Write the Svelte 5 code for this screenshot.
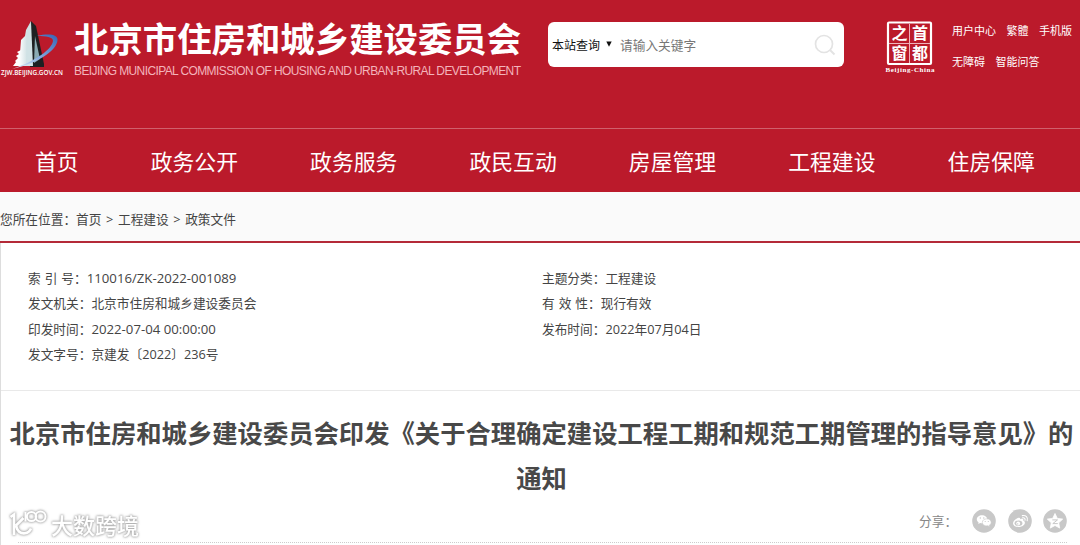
<script lang="ts">
   const siteName: string = "北京市住房和城乡建设委员会";
   const navItems: string[] = ["首页", "政务公开", "政务服务", "政民互动", "房屋管理", "工程建设", "住房保障"];
   const topLinks: string[][] = [
      ["用户中心", "繁體", "手机版"],
      ["无障碍", "智能问答"],
   ];
   const crumbs: string[] = ["首页", "工程建设", "政策文件"];

   const leftInfo = [
      { label: "索 引 号：", value: "110016/ZK-2022-001089", numeric: true },
      { label: "发文机关：", value: siteName },
      { label: "印发时间：", value: "2022-07-04 00:00:00", numeric: true },
      { label: "发文字号：", value: "京建发〔2022〕236号" },
   ];
   const rightInfo = [
      { label: "主题分类：", value: "工程建设" },
      { label: "有 效 性：", value: "现行有效" },
      { label: "发布时间：", value: "2022年07月04日" },
   ];
</script>

<div class="page" lang="zh-CN">
   <header>
      <div class="top">
         <svg class="logo" width="66" height="84" viewBox="0 0 66 84">
            <defs>
               <linearGradient id="ring" x1="0" y1="1" x2="1" y2="0">
                  <stop offset="0" stop-color="#e8f1fa" />
                  <stop offset="0.5" stop-color="#7fa6dc" />
                  <stop offset="1" stop-color="#3563b5" />
               </linearGradient>
               <linearGradient id="tower" x1="0" y1="0" x2="1" y2="0">
                  <stop offset="0" stop-color="#ffffff" />
                  <stop offset="1" stop-color="#b4cfd4" />
               </linearGradient>
            </defs>
            <path d="M13 66l3-4-1-1 3-3-2-2 3-2-2-2 4-2v16z" fill="#fff" />
            <path d="M19 66l2-26 4-4 1-6 5-9 1 45z" fill="url(#tower)" />
            <path d="M31 21l5 5 8 38v3H30z" fill="#1d2022" />
            <path d="M27 30l4-8 2 44h-7z" fill="#d0e2e5" />
            <path d="M35 36l5 23-6 4z" fill="#8aabb2" />
            <path d="M37 36c13-3 21-1 20.500 4C57 50 39 63 12 69c24-8 40-20 41-28 .5-4-7-5-16-5z" fill="url(#ring)" />
            <text x="1" y="75" textLength="62" lengthAdjust="spacingAndGlyphs">ZJW.BEIJING.GOV.CN</text>
         </svg>
         <div class="site-title">
            <h1>{siteName}</h1>
            <svg width="448" height="18" viewBox="0 0 448 18">
               <text x="0" y="14" textLength="447" lengthAdjust="spacing">BEIJING MUNICIPAL COMMISSION OF HOUSING AND URBAN-RURAL DEVELOPMENT</text>
            </svg>
         </div>
         <div class="search">
            <span class="scope">本站查询</span>
            <svg class="arrow" width="6" height="6" viewBox="0 0 6 6"><path d="M.3.5h5.4L3 5.8z" fill="#111" /></svg>
            <span class="placeholder">请输入关键字</span>
            <svg class="lens" width="22" height="22" viewBox="0 0 22 22" fill="none" stroke="#e3e3e3">
               <circle cx="10" cy="10" r="8.5" stroke-width="1.7" />
               <path d="M16 16l4.500 4.500" stroke-width="2" />
            </svg>
         </div>
         <svg class="capital" width="52" height="54" viewBox="0 0 52 54">
            <rect x="4" y="2.500" width="43" height="41.500" rx="1" fill="none" stroke="#fff" stroke-width="2.200" />
            <path d="M25.500 4v39M5 23.500h41" stroke="#efb3ba" stroke-width="1" />
            <g class="seal">
               <text x="7.500" y="18.500">之</text>
               <text x="28" y="18.500">首</text>
               <text x="7.500" y="38.500">窗</text>
               <text x="28" y="38.500">都</text>
            </g>
            <text class="latin" x="1.500" y="52" textLength="49" lengthAdjust="spacing">Beijing-China</text>
         </svg>
         <div class="links">
            {#each topLinks as row}
               <div class="link-row">
                  {#each row as link}
                     <span>{link}</span>
                  {/each}
               </div>
            {/each}
         </div>
      </div>
      <nav>
         {#each navItems as item}
            <span>{item}</span>
         {/each}
      </nav>
   </header>

   <div class="crumbs">您所在位置：{crumbs.join(" > ")}</div>

   <main>
      <section class="info">
         {#each [leftInfo, rightInfo] as column}
            <div class="column">
               {#each column as { label, value, numeric }}
                  <p>{label}<span class:numeric>{value}</span></p>
               {/each}
            </div>
         {/each}
      </section>

      <h2>北京市住房和城乡建设委员会印发《关于合理确定建设工程工期和规范工期管理的指导意见》的<br />通知</h2>

      <div class="share">
         <span>分享：</span>
         <svg width="24" height="24" viewBox="0 0 24 24">
            <circle cx="12" cy="12" r="11.8" fill="#c8c8c8" />
            <path d="M10 6.3c-3 0-5.2 1.8-5.2 4 0 1.300.7 2.400 1.800 3.100l-.4 1.700 2-1c3.800.8 7-1 7-3.800 0-2.200-2.200-4-5.200-4z" fill="#fff" />
            <path d="M14.800 9.800c-2.600 0-4.500 1.600-4.500 3.600 0 2.300 2.500 3.900 5.500 3.400l1.900.9-.4-1.500c1.200-.6 1.900-1.600 1.900-2.800 0-2-1.900-3.600-4.400-3.600z" fill="#fff" stroke="#c8c8c8" stroke-width=".6" />
            <g fill="#c8c8c8"><circle cx="8.300" cy="9" r=".7" /><circle cx="11.800" cy="9" r=".7" /><circle cx="13.200" cy="12.500" r=".6" /><circle cx="16.300" cy="12.500" r=".6" /></g>
         </svg>
         <svg width="24" height="24" viewBox="0 0 24 24">
            <circle cx="12" cy="12" r="11.8" fill="#c8c8c8" />
            <path d="M9.800 9c1.700-.8 2.700-.2 2.300 1.200 2.200-.8 3.800-.3 3.200 1.500 3.500 1.300 1 6.300-4.700 6.300-3 0-5.600-1.400-5.600-3.800C5 12.400 7.400 10 9.800 9z" fill="#fff" />
            <ellipse cx="10.500" cy="14.300" rx="3.900" ry="2.700" fill="#c8c8c8" />
            <circle cx="10.200" cy="14.500" r="1.900" fill="#fff" />
            <circle cx="9.700" cy="14.900" r=".7" fill="#c8c8c8" />
            <path d="M14.300 6.600c3.500-.7 6 2 4.900 5.200M14.600 8.800c1.800-.3 2.900.9 2.400 2.500" fill="none" stroke="#fff" stroke-width="1.100" stroke-linecap="round" />
         </svg>
         <svg width="24" height="24" viewBox="0 0 24 24">
            <circle cx="12" cy="12" r="11.8" fill="#c8c8c8" />
            <path d="M12 4.500l2.300 4.900 5.400.7-4 3.700 1 5.300-4.700-2.600-4.700 2.600 1-5.300-4-3.700 5.400-.7z" fill="#fff" stroke="#fff" stroke-width=".8" stroke-linejoin="round" />
            <path d="M9.300 10.900h5.200l-4.700 3.700h5" fill="none" stroke="#c8c8c8" stroke-width="1" />
         </svg>
      </div>
   </main>

   <div class="watermark">
      <svg width="38" height="28" viewBox="0 0 38 28" fill="none" stroke="#fff" stroke-width="2.600">
         <path d="M1.500 7L5 4.500V25M14.500 8L7 15.500M7 15c1 6 4.500 9 9 8.300 3-.5 5-2.300 6-4.800" />
         <path d="M16.500 2v9.500" stroke-width="2" />
         <circle cx="22.500" cy="6.500" r="4.600" stroke-width="2" />
         <circle cx="31.500" cy="6.500" r="5" stroke-width="2" />
      </svg>
      <span>大数跨境</span>
   </div>
</div>

<style>
   :global(body) {
      margin: 0;
      overflow: hidden;
   }

   .page {
      position: relative;
      width: 1080px;
      height: 545px;
      overflow: hidden;
      background: #fff;
      color: #444;
      font-family: "Open Sans", "Noto Sans CJK SC", sans-serif;
      font-size: 12.7px;
   }

   .page * {
      box-sizing: border-box;
   }

   svg {
      flex: none;
      display: block;
   }

   header {
      height: 192px;
      background: #bb1a2b;
      color: #fff;
   }

   .top {
      display: flex;
      align-items: flex-start;
      height: 128px;
   }

   .logo text {
      font: 600 7px "Open Sans", sans-serif;
      fill: #fff;
   }

   .site-title {
      width: 474px;
      padding: 14px 0 0 8px;
   }

   h1 {
      margin: 0;
      font: bold 34.4px/47px "Noto Sans CJK SC", sans-serif;
      white-space: nowrap;
   }

   .site-title svg text {
      font: 12px "Liberation Sans", sans-serif;
      fill: #f3b4bb;
   }

   .search {
      display: flex;
      align-items: center;
      width: 296px;
      height: 45px;
      margin: 22px 0 0 8px;
      padding: 0 8px 0 4px;
      border-radius: 6px;
      background: #fff;
      font-size: 12px;
   }

   .scope {
      color: #111;
   }

   .arrow {
      margin: 0 8px 2px 6px;
   }

   .placeholder {
      color: #777;
      font-size: 12.7px;
   }

   .lens {
      margin-left: auto;
   }

   .capital {
      margin: 20px 0 0 40px;
   }

   .seal text {
      font: bold 16px "Noto Sans CJK SC", sans-serif;
      fill: #fff;
   }

   .latin {
      font: bold 7px "Liberation Serif", serif;
      fill: #fff;
   }

   .links {
      padding: 20px 0 0 16px;
      font-size: 11px;
      line-height: 21px;
   }

   .link-row {
      display: flex;
      gap: 10.500px;
      margin-bottom: 9.500px;
      white-space: nowrap;
   }

   nav {
      display: flex;
      gap: 72px;
      height: 64px;
      padding-left: 35px;
      border-top: 1px solid #d0606c;
      font-size: 21.85px;
      line-height: 65px;
      white-space: nowrap;
   }

   .crumbs {
      height: 51px;
      border-bottom: 2px solid #b42a38;
      background: #fafafa;
      line-height: 54px;
      word-spacing: 1.300px;
   }

   main {
      height: 302px;
      border-left: 1px solid #ddd;
   }

   .info {
      display: flex;
      height: 148px;
      padding: 23px 0 0 27px;
      border-bottom: 1px solid #e9e9e9;
   }

   .column {
      width: 514px;
   }

   p {
      height: 25.300px;
      margin: 0;
      line-height: 25.300px;
      white-space: pre;
      word-spacing: 0.7px;
   }

   .numeric {
      font-size: 13.200px;
      word-spacing: 0;
   }

   h2 {
      height: 108px;
      margin: 0 -2px 0 0;
      padding-top: 19px;
      color: #484848;
      font: bold 25.330px/45px "Noto Sans CJK SC", sans-serif;
      text-align: center;
      white-space: nowrap;
   }

   .share {
      display: flex;
      align-items: center;
      justify-content: flex-end;
      gap: 11.300px;
      height: 44px;
      margin: 0 13px 0 17px;
      border-bottom: 1px dotted #ccc;
      color: #888;
   }

   .share span {
      margin-right: 4px;
      font-size: 12.700px;
   }

   /* translucent badge lying over the bottom-left corner */
   .watermark {
      position: absolute;
      left: 9px;
      top: 510px;
      display: flex;
      align-items: center;
      gap: 4px;
      color: #fff;
      font: 500 22px/28px "Noto Sans CJK SC", sans-serif;
      filter: drop-shadow(0 0 1px #aaa) drop-shadow(0 0 1px #bbb);
   }
</style>
